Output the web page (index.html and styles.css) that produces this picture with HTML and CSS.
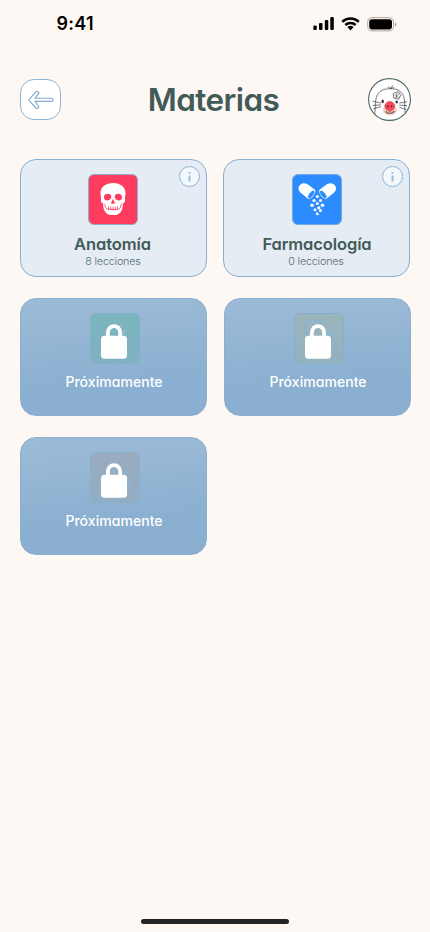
FILE: index.html
```html
<!DOCTYPE html>
<html lang="es">
<head>
<meta charset="utf-8">
<meta name="viewport" content="width=device-width, initial-scale=1">
<title>Materias</title>
<link rel="stylesheet" href="styles.css">
</head>
<body>
<svg class="defs" width="0" height="0" aria-hidden="true">
  <symbol id="info" viewBox="0 0 22 22">
    <circle cx="10.5" cy="11.5" r="10" fill="#f3f8fc" stroke="#8bb2d3"/>
    <path d="M9.600 7h1.900v1.700H9.600zM9.500 10.500h2v6h-2z" fill="#9bbcd9"/>
  </symbol>
  <symbol id="lock" viewBox="0 0 26 35">
    <path d="M6.900 14V8.200a6.100 6.100 0 0 1 12.200 0V14" fill="none" stroke="#fff" stroke-width="3.700"/>
    <rect y="11.800" width="26" height="23" rx="3.500" fill="#fff"/>
  </symbol>
  <symbol id="capsule" viewBox="0 0 50 51">
    <path d="M8.400 18.400C3.500 14.100 8.800 6.600 15.200 10.100l7.500 5.500c2.600 2-3.700 11.300-6.700 9.100z" fill="#fff"/>
    <ellipse cx="19.200" cy="20.500" rx="1.900" ry="4.600" transform="rotate(38 19.200 20.500)" fill="#2c8bff"/>
  </symbol>
</svg>
<main class="screen">
  <div class="status">
    <span class="time">9:41</span>
    <div class="signals">
      <svg width="22" height="14" viewBox="0 0 22 14"><rect x=".3" y="8.400" width="3.500" height="4.600" rx="1.100"/><rect x="6" y="6" width="3.500" height="7" rx="1.100"/><rect x="11.800" y="3" width="3.500" height="10" rx="1.100"/><rect x="17.300" y="0" width="3.500" height="13" rx="1.100"/></svg>
      <svg class="wifi" width="19" height="14" viewBox="0 0 19 14"><g fill="none" stroke="#000" stroke-width="2.500"><path d="M1.200 4.800a12 12 0 0 1 16.600 0"/><path d="M4.300 8a7.600 7.600 0 0 1 10.400 0"/></g><path d="M6.400 10.100a4.600 4.600 0 0 1 6.200 0L9.500 13.400z"/></svg>
      <svg width="30" height="15" viewBox="0 0 30 15"><rect x=".7" y=".7" width="25.800" height="13.200" rx="4.200" fill="none" stroke="#aca7a3"/><rect x="2.200" y="2.200" width="22.800" height="10.200" rx="2.800"/><path d="M28 5.200v4.400q1.500-.7 1.500-2.200T28 5.200z" fill="#aca7a3"/></svg>
    </div>
  </div>

  <header class="header">
    <button class="back" aria-label="Volver">
      <svg width="27" height="20" viewBox="0 0 27 20"><path d="M2.400 9.100 8.800 1.900a1.700 1.700 0 0 1 2.500 2.300L8.100 8.200h16.300a1.600 1.600 0 0 1 0 3.200H8.100l3.200 4.300a1.700 1.700 0 0 1-2.500 2.300L2.400 10.700a1.100 1.100 0 0 1 0-1.600z" fill="#fff" stroke="#86a9d2" stroke-width="1.150"/></svg>
    </button>
    <h1 class="title">Materias</h1>
    <svg class="avatar" width="43" height="43" viewBox="0 0 43 43">
      <circle cx="21.500" cy="21.500" r="20.900" fill="#fff" stroke="#4b6865" stroke-width="1.100"/>
      <ellipse cx="21.800" cy="32" rx="7" ry="5.400" fill="#ffd0be"/>
      <g fill="none" stroke="#414141" stroke-width=".7" stroke-linecap="round">
        <path d="M6.800 35.500C7.500 31 6.800 25 8.300 19.500C10 13.400 15 10.600 22.500 10.700S35 13.500 36.300 21c.6 4 .1 9 1 14"/>
        <path d="M22.800 10.600c-.8-1.100-1.800-1.500-2.800-1.400m2.800 1.400c.2-1.600.9-2.400 2-2.800m-2 2.800c1-.9 2.200-1.200 3.300-.8"/>
        <path d="M5 23.200l7.500 1.700M5 27.400l7.500-.5M5.800 30.900l6.600-2.200M31.800 25l6.800-1.200M31.800 27.200l6.800.4M31.800 29.400l6 2"/>
        <path d="M18.200 33.400c0 1.400 2.800 1.500 3.700 0 .9 1.500 3.600 1.400 3.700 0M17 33.800c1.500 2.500 8.500 2.500 10-.4"/>
        <path d="M25.500 17.200c-1.500-2.200 1.400-3.700 2.600-2 .1-2.200 3.600-1.800 3.100.5 2.200.3 2.200 2.900.2 3.100 1 2-1.900 3.300-3 1.400-1.700 1.500-3.800-.9-2.900-3z"/>
        <path d="m27 16.500 4 3.800M31 16l-4.500 3.700M29 14.700l-.7 5.600" stroke-width=".5"/>
      </g>
      <ellipse cx="14.700" cy="23.400" rx="1.200" ry="1.800" fill="#353535"/><ellipse cx="28.700" cy="24" rx="1.200" ry="1.400" fill="#353535"/>
      <ellipse cx="21.800" cy="28.200" rx="5" ry="4.700" fill="#fa4b5c" stroke="#b33b48" stroke-width=".5"/>
      <ellipse cx="19.900" cy="28.300" rx=".8" ry="1.400" fill="#792c38"/><ellipse cx="23.600" cy="28.300" rx=".8" ry="1.400" fill="#792c38"/>
    </svg>
  </header>

  <section class="subjects">
    <div class="row open-row">
      <article class="card open anatomy">
        <svg class="info" width="22" height="22"><use href="#info"/></svg>
        <svg class="tile" width="50" height="51" viewBox="0 0 50 51">
          <rect x=".5" y=".5" width="49" height="50" rx="5.500" fill="#ff3b5f" stroke="#88b0d1"/>
          <path d="M25 9c7.400 0 12.500 4.200 12.500 10.300 0 3-.8 4-.5 5.700.3 2.400-.2 4.200-2.300 4.400.3 2.400 0 5.200-1.200 7.300-1.600 3.200-4.400 4.400-8.500 4.400s-6.900-1.200-8.500-4.400c-1.200-2.100-1.500-4.900-1.200-7.300-2.100-.2-2.600-2-2.300-4.400.3-1.700-.5-2.700-.5-5.700C12.500 13.200 17.600 9 25 9z" fill="#fff"/>
          <path d="M16 22.400c.3-3.200 6.500-3.600 7.200-.4.500 2.500-1.600 4.400-4 4.400-2.200 0-3.400-1.300-3.200-4zM34 22.400c-.3-3.200-6.500-3.600-7.200-.4-.5 2.500 1.600 4.400 4 4.400 2.200 0 3.400-1.300 3.200-4zM25 24.800l-2.100 4.500 1.500.8.600-.8.600.8 1.500-.8z" fill="#ff3b5f"/>
          <path d="M16.500 29.800c1 2.500.8 4.400 2.700 5.200q5.800 1.400 11.600 0c1.900-.8 1.700-2.700 2.700-5.200M20.500 32.300v3.500M22.700 32.600v3.500M25 32.700v3.500M27.300 32.600v3.500M29.500 32.300v3.500" fill="none" stroke="#ff3b5f" stroke-width=".8"/>
        </svg>
        <h2 class="name">Anatomía</h2>
        <p class="count">8 lecciones</p>
      </article>
      <article class="card open pharmacology">
        <svg class="info" width="22" height="22"><use href="#info"/></svg>
        <svg class="tile" width="50" height="51" viewBox="0 0 50 51">
          <rect x=".5" y=".5" width="49" height="50" rx="5.500" fill="#2c8bff" stroke="#76aadd"/>
          <use href="#capsule" width="50" height="51"/>
          <use href="#capsule" width="50" height="51" transform="translate(50.500 0) scale(-1 1)"/>
          <g fill="#fff"><circle cx="25.300" cy="22.500" r="1.500"/><circle cx="22" cy="26.500" r="1.600"/><circle cx="28.500" cy="26.500" r="1.600"/><circle cx="25.300" cy="29.500" r="1.500"/><circle cx="20" cy="31.300" r="1.800"/><circle cx="30.500" cy="31.300" r="1.800"/><circle cx="26.800" cy="33.800" r="1.600"/><circle cx="23" cy="35.700" r="1.500"/><circle cx="28.500" cy="36.600" r="1.500"/><circle cx="25.300" cy="39.700" r="1.500"/></g>
        </svg>
        <h2 class="name">Farmacología</h2>
        <p class="count">0 lecciones</p>
      </article>
    </div>
    <div class="row locked-row">
      <article class="card locked">
        <div class="tile locked-tile teal"><svg class="ghost" width="50" height="51" viewBox="0 0 50 51"><path d="m20 18 5-7 1 5 5-4-2 7 6 0-5 5 4 2" fill="none" stroke="#91b9d3" stroke-width="1.500"/></svg><svg class="lock" width="26" height="35"><use href="#lock"/></svg></div>
        <p class="soon">Próximamente</p>
      </article>
      <article class="card locked">
        <div class="tile locked-tile olive"><svg class="ghost" width="50" height="51" viewBox="0 0 50 51"><path d="M17 8h-3q-3 0-3 3 0 11 5 14M21 8h3q3 0 3 3M34 18q3 3 1 8" fill="none" stroke="#8eb3ce" stroke-width="2"/><circle cx="36" cy="22" r="3.500" fill="#8eb3ce"/></svg><svg class="lock" width="26" height="35"><use href="#lock"/></svg></div>
        <p class="soon">Próximamente</p>
      </article>
      <article class="card locked">
        <div class="tile locked-tile gray"><svg class="ghost" width="50" height="51" viewBox="0 0 50 51"><path d="M25 9v8M20 15c-7 5-12 14-11 23 5 2 10 1 14-2V15zm10 0c7 5 12 14 11 23-5 2-10 1-14-2V15z" fill="#91b1cb" stroke="#91b1cb"/></svg><svg class="lock" width="26" height="35"><use href="#lock"/></svg></div>
        <p class="soon">Próximamente</p>
      </article>
    </div>
  </section>
  <div class="home"></div>
</main>
</body>
</html>
```
FILE: styles.css
```css
* { box-sizing: border-box; }
body { margin: 0; background: #fef8f4; font-family: Inter, sans-serif; font-feature-settings: "cv11"; color: #435b58; }
h1, h2, p { margin: 0; white-space: nowrap; }
.defs { position: absolute; }
.screen { width: 430px; height: 932px; display: flex; flex-direction: column; overflow: hidden; }
.status { height: 78px; padding: 12px 33px 0 56.5px; display: flex; justify-content: space-between; align-items: flex-start; }
.time { color: #000; font-size: 18px; line-height: 24px; font-weight: 600; letter-spacing: .3px; }
.signals { display: flex; gap: 6.5px; padding-top: 5px; }
.signals svg { display: block; }
.signals .wifi { margin: 0 1px 0 -1px; }
.header { height: 43px; padding: 0 19px 0 20px; display: flex; justify-content: space-between; align-items: center; }
.back { width: 41px; height: 41px; padding: 0; border: 1px solid #8db4d8; border-radius: 14px; background: #fff; display: flex; align-items: center; justify-content: center; }
.title { font-size: 31.5px; line-height: 42px; font-weight: 600; letter-spacing: -.6px; margin-left: -2px; }
.avatar { display: block; }
.subjects { flex: 1; padding: 38px 19px 0 20px; display: flex; flex-direction: column; gap: 21px; }
.row { display: grid; }
.open-row { grid-template-columns: 187px 187px; column-gap: 16px; }
.locked-row { grid-template-columns: 187px 187px; column-gap: 17px; row-gap: 21px; }
.card { height: 118px; border: 1px solid #88b0d3; border-radius: 16px; position: relative; display: flex; flex-direction: column; align-items: center; padding-top: 14px; }
.open { background: #e5ecf4; }
.anatomy { padding-right: 1px; }
.pharmacology { padding-left: 1px; }
.locked { background: linear-gradient(175deg, #9dbbd7, #8aafd0 72%); border-color: #89afd1; padding-left: 2px; }
.info { position: absolute; top: 5px; right: 5px; }
.tile { width: 50px; height: 51px; flex: none; display: block; }
.name { font-size: 16.5px; line-height: 20px; font-weight: 600; letter-spacing: -.1px; margin-top: 9px; }
.anatomy .name { margin-left: -1px; }
.count { font-size: 10.8px; line-height: 16px; font-weight: 300; letter-spacing: -.2px; color: #566c6d; }
.pharmacology .count { margin-left: -2px; }
.locked-tile { border: 1px solid #88b0cc; border-radius: 6px; position: relative; }
.teal { background: linear-gradient(#7ab5bd, #80b1c3); border-color: #82b2c7; }
.olive { background: linear-gradient(#9bb5bb, #91b1c1); }
.gray { background: linear-gradient(#9bacbe, #91adc4); }
.ghost { position: absolute; left: -1px; top: -1px; }
.lock { position: absolute; left: 10px; top: 10px; }
.soon { color: #fff; font-size: 14px; line-height: 18px; font-weight: 500; letter-spacing: .05px; margin: 9px 0 0 -1px; }
.home { width: 148px; height: 5px; margin: 0 auto 8px; border-radius: 3px; background: #242424; }
```
